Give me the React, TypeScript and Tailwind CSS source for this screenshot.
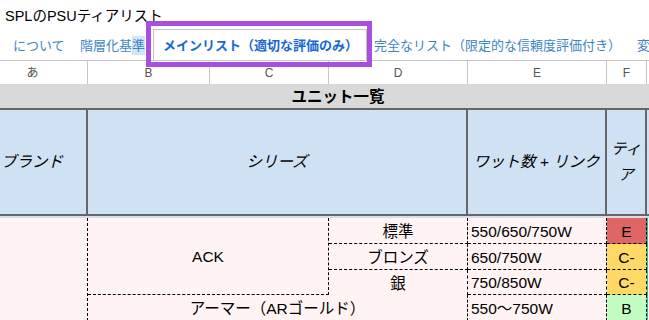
const dashed = "border-dashed border-black";
const headCell = "flex items-center justify-center border-r-2 border-[#666666] italic";

const series = [
  { grade: "標準", watts: "550/650/750W", tier: "E", tone: "bg-[#e06666]" },
  { grade: "ブロンズ", watts: "650/750W", tier: "C-", tone: "bg-[#ffd966]" },
  { grade: "銀", watts: "750/850W", tier: "C-", tone: "bg-[#ffd966]" },
];

const letters = [
  { label: "あ", w: "w-[88px] pr-[22px]" },
  { label: "B", w: "w-[122px]" },
  { label: "C", w: "w-[119px]" },
  { label: "D", w: "w-[139px]" },
  { label: "E", w: "w-[139px]" },
  { label: "F", w: "w-[40px]" },
];

export default function App() {
  return (
    <div className="relative h-[320px] w-[649px] overflow-hidden bg-white font-['Liberation_Sans','Noto_Sans_CJK_JP',sans-serif] text-black">
      <div className="flex h-[29px] items-center pl-[5px] pt-[5px] text-[14.5px]">SPLのPSUティアリスト</div>

      {/* sheet tabs */}
      <div className="flex h-[32px] items-stretch overflow-hidden whitespace-nowrap border-b border-[#c6c6c6] text-[13px] text-[#3d85c6]">
        <div className="flex w-[80px] shrink-0 items-center pl-[13px] pt-[2px]">について</div>
        <div className="flex w-[73px] shrink-0 items-center pt-[2px]">
          階層化基<span className="bg-[#d3e5f6]">準</span>
        </div>
        <div className="flex w-[214px] shrink-0 items-center border border-b-0 border-[#c2c2c2] bg-white pl-[9px] pt-[2px] font-bold text-[#1967d2]">
          メインリスト（適切な評価のみ）
        </div>
        <div className="flex w-[263px] shrink-0 items-center pl-[7px] pt-[2px]">完全なリスト（限定的な信頼度評価付き）</div>
        <div className="flex shrink-0 items-center pl-[7px] pt-[2px]">変</div>
      </div>

      {/* column letters */}
      <div className="flex h-[23px] text-[12px] text-[#555555]">
        {letters.map((l) => (
          <div key={l.label} className={`flex shrink-0 items-center justify-center border-r border-[#c6c6c6] ${l.w}`}>
            {l.label}
          </div>
        ))}
      </div>

      <div className="flex h-[26px] items-center justify-center border-b-2 border-[#666666] bg-[#d9d9d9] pl-[27px] pt-[1px] text-[15.5px] font-bold">
        ユニット一覧
      </div>

      {/* header row */}
      <div className="flex h-[106px] border-b-2 border-[#666666] bg-[#cfe2f3] text-[15.5px]">
        <div className={`${headCell} w-[88px] shrink-0 pr-[22px]`}>ブランド</div>
        <div className={`${headCell} w-[380px] shrink-0`}>シリーズ</div>
        <div className={`${headCell} w-[139px] shrink-0 whitespace-nowrap`}>ワット数 + リンク</div>
        <div className={`${headCell} w-[40px] shrink-0 text-center leading-[26px]`}>
          ティ
          <br />ア
        </div>
      </div>
      <div className="h-[2px] bg-[#d6dee9]" />

      {/* data rows */}
      <div className="grid grid-cols-[88px_122px_119px_139px_139px_40px_1fr] grid-rows-[26px_26px_25px_26px] bg-[#fff4f3] text-[15.5px]">
        <div className={`${dashed} col-start-1 row-span-4 row-start-1 border-r`} />
        <div className={`${dashed} col-span-2 col-start-2 row-span-3 row-start-1 flex items-center justify-center border-b border-r pt-[2px]`}>
          ACK
        </div>
        {series.map((s, i) => (
          <div key={s.grade} className="contents">
            <div
              className={`${dashed} col-start-4 flex items-center justify-center border-r pt-[3px] ${i < 2 ? "border-b" : ""}`}
              style={{ gridRowStart: i + 1 }}
            >
              {s.grade}
            </div>
            <div className={`${dashed} col-start-5 flex items-center border-b border-r pl-[3px] pt-[2px]`} style={{ gridRowStart: i + 1 }}>
              {s.watts}
            </div>
            <div
              className={`${dashed} col-start-6 flex items-center justify-center border-b border-r pt-[2px] ${s.tone}`}
              style={{ gridRowStart: i + 1 }}
            >
              {s.tier}
            </div>
            <div className="col-start-7 border-l border-[#19c9ad]" style={{ gridRowStart: i + 1 }} />
          </div>
        ))}
        <div className={`${dashed} col-span-3 col-start-2 row-start-4 flex items-center justify-center border-b border-r pt-[2px]`}>
          アーマー（ARゴールド）
        </div>
        <div className={`${dashed} col-start-5 row-start-4 flex items-center border-b border-r pl-[3px] pt-[2px]`}>550〜750W</div>
        <div className={`${dashed} col-start-6 row-start-4 flex items-center justify-center border-b border-r bg-[#c3fdc3] pt-[2px]`}>B</div>
        <div className="col-start-7 row-start-4 border-l border-[#19c9ad]" />
      </div>

      {/* highlight around the active tab */}
      <div className="pointer-events-none absolute left-[146px] top-[21px] h-[46px] w-[226px] border-[5px] border-[#a94ee3]" />
    </div>
  );
}
